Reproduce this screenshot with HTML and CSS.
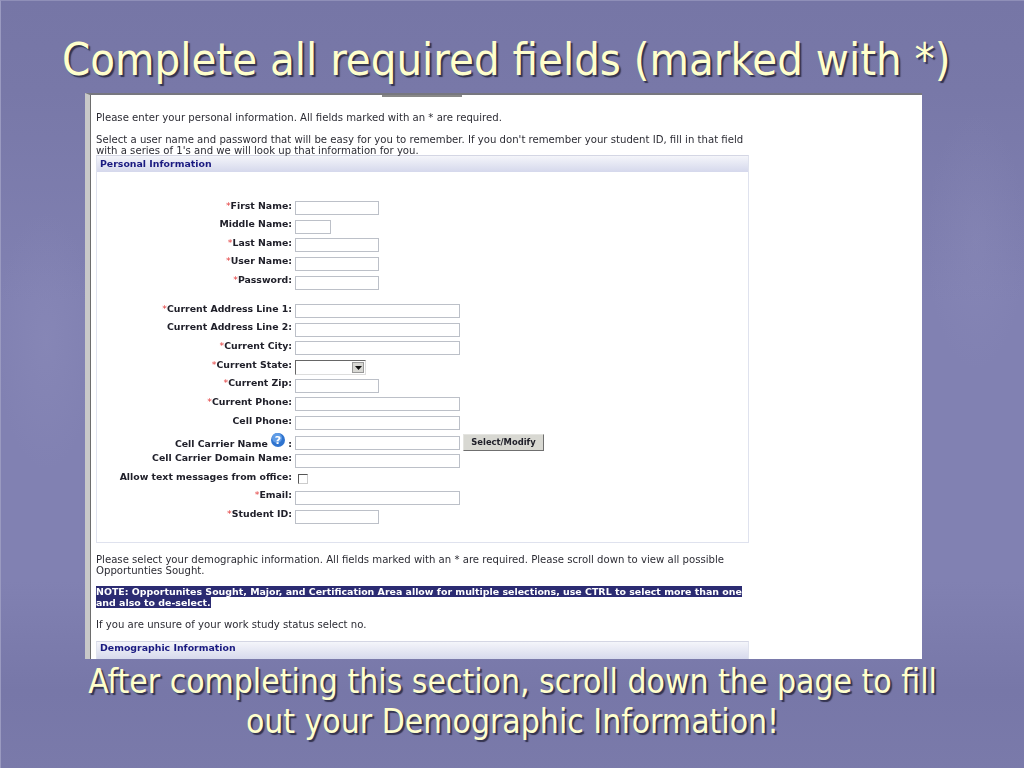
FILE: index.html
```html
<!DOCTYPE html>
<html lang="en">
<head>
<meta charset="utf-8">
<title>Complete all required fields</title>
<link rel="stylesheet" href="styles.css">
</head>
<body>
<main class="slide">
  <h1 class="title">Complete all required fields (marked with *)</h1>
  <section class="shot">
    <div class="tab"></div>
    <p class="copy first">Please enter your personal information. All fields marked with an * are required.</p>
    <p class="copy gap">Select a user name and password that will be easy for you to remember. If you don't remember your student ID, fill in that field<br>with a series of 1's and we will look up that information for you.</p>
    <div class="panel">
      <h2 class="panel-head">Personal Information</h2>
      <div class="fields">
        <div class="row"><label class="lbl"><i>*</i>First Name:</label><input class="in md"></div>
        <div class="row"><label class="lbl">Middle Name:</label><input class="in sm"></div>
        <div class="row"><label class="lbl"><i>*</i>Last Name:</label><input class="in md"></div>
        <div class="row"><label class="lbl"><i>*</i>User Name:</label><input class="in md"></div>
        <div class="row"><label class="lbl"><i>*</i>Password:</label><input class="in md"></div>
        <div class="spacer"></div>
        <div class="row"><label class="lbl"><i>*</i>Current Address Line 1:</label><input class="in lg"></div>
        <div class="row"><label class="lbl">Current Address Line 2:</label><input class="in lg"></div>
        <div class="row"><label class="lbl"><i>*</i>Current City:</label><input class="in lg"></div>
        <div class="row"><label class="lbl"><i>*</i>Current State:</label>
          <div class="sel"><span class="sel-btn"><svg width="7" height="4" viewBox="0 0 7 4"><path d="M0 0h7L3.500 4z" fill="#111"/></svg></span></div>
        </div>
        <div class="row"><label class="lbl"><i>*</i>Current Zip:</label><input class="in md"></div>
        <div class="row"><label class="lbl"><i>*</i>Current Phone:</label><input class="in lg"></div>
        <div class="row"><label class="lbl">Cell Phone:</label><input class="in lg"></div>
        <div class="row tall"><label class="lbl low">Cell Carrier Name
            <svg class="help" width="14" height="14" viewBox="0 0 14 14"><circle cx="7" cy="7" r="7" fill="#2f74cf"/><circle cx="6" cy="5" r="5" fill="#5f9ce6"/><text x="7" y="11" text-anchor="middle" class="help-q">?</text></svg> :</label>
          <input class="in lg low-in"><button class="btn" type="button">Select/Modify</button></div>
        <div class="row"><label class="lbl">Cell Carrier Domain Name:</label><input class="in lg"></div>
        <div class="row"><label class="lbl">Allow text messages from office:</label><span class="check"></span></div>
        <div class="row"><label class="lbl"><i>*</i>Email:</label><input class="in lg"></div>
        <div class="row"><label class="lbl"><i>*</i>Student ID:</label><input class="in md"></div>
      </div>
    </div>
    <p class="copy after">Please select your demographic information. All fields marked with an * are required. Please scroll down to view all possible<br>Opportunties Sought.</p>
    <p class="copy note"><mark>NOTE: Opportunites Sought, Major, and Certification Area allow for multiple selections, use CTRL to select more than one<br>and also to de-select.</mark></p>
    <p class="copy unsure">If you are unsure of your work study status select no.</p>
    <div class="panel cut">
      <h2 class="panel-head tall-head">Demographic Information</h2>
    </div>
  </section>
  <p class="caption">After completing this section, scroll down the page to fill<br>out your Demographic Information!</p>
</main>
</body>
</html>
```
FILE: styles.css
```css
html, body { margin: 0; padding: 0; }
body { width: 1024px; height: 768px; overflow: hidden; background: #7a7aaa; }
.slide {
  box-sizing: border-box;
  width: 1024px;
  height: 768px;
  overflow: hidden;
  display: flex;
  flex-direction: column;
  border-top: 1px solid #8f8fb8;
  border-left: 1px solid #9a9ac0;
  background:
    radial-gradient(ellipse 50px 130px at 45px 340px, rgba(160,160,200,.16), transparent),
    radial-gradient(ellipse 50px 130px at 975px 240px, rgba(160,160,200,.14), transparent),
    linear-gradient(180deg, #7676a6 0, #7878a8 90px, #8181b2 300px, #8181b2 580px, #7777a8 690px, #7a7aaa 768px);
}
.title {
  margin: 0;
  height: 92px;
  padding-left: 61px;
  box-sizing: border-box;
  font-family: "DejaVu Sans Condensed", "DejaVu Sans", sans-serif;
  font-stretch: condensed;
  font-weight: 400;
  font-size: 45px;
  line-height: 118px;
  color: #ffffcc;
  text-shadow: 2px 2px 1px #33334f;
  white-space: nowrap;
}
.shot {
  position: relative;
  box-sizing: border-box;
  flex: none;
  width: 837px;
  height: 566px;
  margin-left: 84px;
  padding: 0 0 0 6px;
  overflow: hidden;
  background: #fff;
  border-top: 2px solid #77777f;
  border-left: 5px solid #c8c8c8;
  box-shadow: inset 1px 0 0 #6d6d6d;
  font: 10.150px/11px "DejaVu Sans", Verdana, sans-serif;
  color: #2c2c34;
  filter: blur(.3px);
}
.tab { position: absolute; top: 0; left: 292px; width: 80px; height: 2px; background: #888; }
.copy { margin: 0; white-space: nowrap; }
.first { padding-top: 17px; }
.gap { padding-top: 11px; margin-bottom: -1px; }
.panel {
  box-sizing: border-box;
  width: 653px;
  border: 1px solid #dfe2ee;
  border-top-color: #d4d6e4;
}
.panel-head {
  margin: 0;
  height: 16px;
  padding: 2px 0 0 3px;
  box-sizing: border-box;
  font: 700 9.400px/11px "DejaVu Sans", Verdana, sans-serif;
  color: #1a1a80;
  background: linear-gradient(180deg, #f4f5fa, #d5d8ec);
}
.fields { height: 370px; padding-top: 26px; box-sizing: border-box; }
.row {
  display: flex;
  align-items: flex-start;
  height: 18.650px;
}
.spacer { height: 10px; }
.row.tall { height: 20px; margin-top: -1px; }
.lbl {
  box-sizing: border-box;
  width: 195px;
  text-align: right;
  font-size: 9.350px;
  font-weight: 700;
  color: #20202a;
  white-space: nowrap;
  flex: none;
  padding-top: 1.500px;
}
.lbl i { color: #e23a3a; font-style: normal; font-weight: 400; }
.low { padding-top: 2.500px; }
.in {
  box-sizing: border-box;
  height: 14px;
  margin: 3px 0 0 3px;
  padding: 0;
  border: 1px solid #bcc0c8;
  background: #fff;
  flex: none;
}
.sm { width: 36px; }
.md { width: 84px; }
.lg { width: 165px; }
.low-in { margin-top: 5px; }
.sel {
  box-sizing: border-box;
  display: flex;
  justify-content: flex-end;
  width: 71px;
  height: 15px;
  margin: 3px 0 0 3px;
  padding: 1px;
  background: #fff;
  border: 1px solid;
  border-color: #666 #ddd #ddd #666;
}
.sel-btn {
  display: flex;
  align-items: center;
  justify-content: center;
  width: 12px;
  background: #d8d8d4;
  border: 1px solid #999;
  box-sizing: border-box;
}
.help { vertical-align: 0; }
.help-q { font: 700 11px "DejaVu Sans", sans-serif; fill: #fff; }
.btn {
  box-sizing: border-box;
  width: 81px;
  height: 17px;
  margin: 3px 0 0 3px;
  padding: 0;
  border: 1px solid;
  border-color: #e4e4e0 #6f6f6f #6f6f6f #e4e4e0;
  background: #d8d8d2;
  font: 700 8.400px/13px "DejaVu Sans", sans-serif;
  color: #20202a;
}
.check {
  box-sizing: border-box;
  width: 10px;
  height: 10px;
  margin: 5px 0 0 6px;
  border: 1px solid;
  border-color: #555 #ccc #ccc #555;
  flex: none;
}
.after { padding-top: 11px; }
.note { padding-top: 10px; font-size: 9.430px; font-weight: 700; }
.note mark { background: #2b2b72; color: #fff; }
.unsure { padding-top: 11px; }
.cut { margin-top: 11px; border-bottom: 0; }
.tall-head { height: 30px; padding-top: 0; background: linear-gradient(180deg, #f4f5fa, #d5d8ec 18px); }
.caption {
  margin: 0;
  text-align: center;
  font-family: "DejaVu Sans Condensed", "DejaVu Sans", sans-serif;
  font-stretch: condensed;
  font-size: 33.400px;
  line-height: 40px;
  color: #ffffcc;
  text-shadow: 2px 2px 1px #33334f;
  padding-top: 3px;
  white-space: nowrap;
}
```
